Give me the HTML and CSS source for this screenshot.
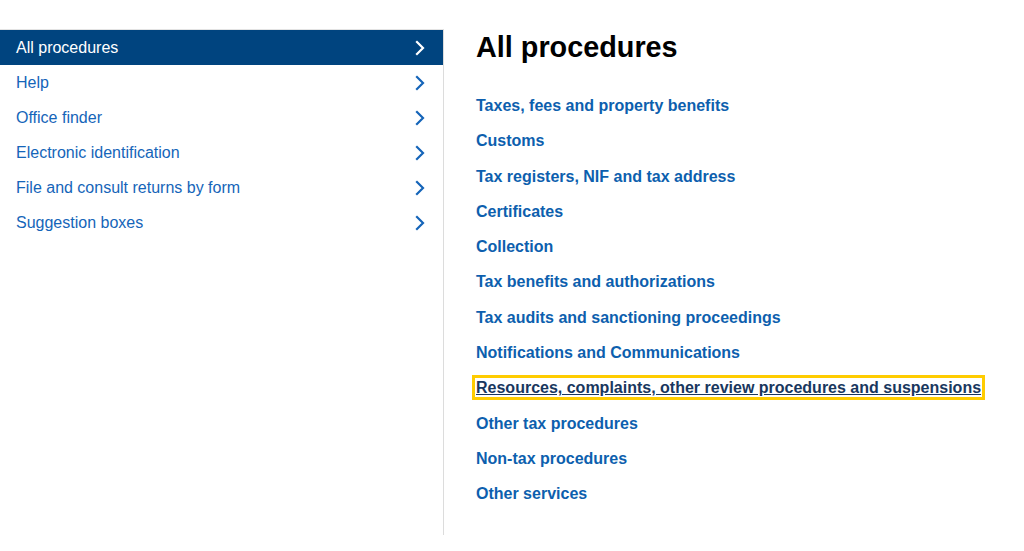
FILE: index.html
```html
<!DOCTYPE html>
<html lang="en">
<head>
<meta charset="utf-8">
<title>All procedures</title>
<link rel="stylesheet" href="styles.css">
</head>
<body>
<div class="page">
  <nav class="sidebar">
    <ul class="side-list">
      <li><a class="side-item active" href="#">All procedures<svg class="chev" viewBox="0 0 10 16"><path d="M2 2 L8 8 L2 14"/></svg></a></li>
      <li><a class="side-item" href="#">Help<svg class="chev" viewBox="0 0 10 16"><path d="M2 2 L8 8 L2 14"/></svg></a></li>
      <li><a class="side-item" href="#">Office finder<svg class="chev" viewBox="0 0 10 16"><path d="M2 2 L8 8 L2 14"/></svg></a></li>
      <li><a class="side-item" href="#">Electronic identification<svg class="chev" viewBox="0 0 10 16"><path d="M2 2 L8 8 L2 14"/></svg></a></li>
      <li><a class="side-item" href="#">File and consult returns by form<svg class="chev" viewBox="0 0 10 16"><path d="M2 2 L8 8 L2 14"/></svg></a></li>
      <li><a class="side-item" href="#">Suggestion boxes<svg class="chev" viewBox="0 0 10 16"><path d="M2 2 L8 8 L2 14"/></svg></a></li>
    </ul>
  </nav>
  <main class="main">
    <h1 class="title">All procedures</h1>
    <ul class="proc-list">
      <li><a href="#">Taxes, fees and property benefits</a></li>
      <li><a href="#">Customs</a></li>
      <li><a href="#">Tax registers, NIF and tax address</a></li>
      <li><a href="#">Certificates</a></li>
      <li><a href="#">Collection</a></li>
      <li><a href="#">Tax benefits and authorizations</a></li>
      <li><a href="#">Tax audits and sanctioning proceedings</a></li>
      <li><a href="#">Notifications and Communications</a></li>
      <li><a class="focused" href="#">Resources, complaints, other review procedures and suspensions</a></li>
      <li><a href="#">Other tax procedures</a></li>
      <li><a href="#">Non-tax procedures</a></li>
      <li><a href="#">Other services</a></li>
    </ul>
  </main>
</div>
</body>
</html>
```

FILE: styles.css
```css
* { box-sizing: border-box; }

html, body {
  margin: 0;
  padding: 0;
  background: #ffffff;
  font-family: "Liberation Sans", Arial, sans-serif;
}

.page {
  display: flex;
  align-items: flex-start;
  padding-top: 29px;
}

.sidebar {
  width: 444px;
  flex: 0 0 444px;
  height: 506px;
  border-top: 1px solid #e3e3e3;
  border-right: 1px solid #dcdcdc;
}

.side-list {
  list-style: none;
  margin: 0;
  padding: 0;
}

.side-item {
  display: flex;
  align-items: center;
  justify-content: space-between;
  height: 35px;
  padding: 1px 18px 0 16px;
  font-size: 16px;
  color: #1565b9;
  text-decoration: none;
}

.side-item.active {
  background: #00447f;
  color: #ffffff;
}

.chev {
  width: 10px;
  height: 16px;
  fill: none;
  stroke: currentColor;
  stroke-width: 2.2;
  stroke-linecap: square;
  stroke-linejoin: miter;
}

.main {
  flex: 1;
  padding: 1px 0 0 32px;
}

.title {
  margin: 0 0 31.5px;
  font-size: 28.8px;
  line-height: 34.5px;
  font-weight: bold;
  color: #000000;
}

.proc-list {
  list-style: none;
  margin: 0;
  padding: 0;
  display: flex;
  flex-direction: column;
  gap: 16.1px;
}

.proc-list li {
  line-height: 19.2px;
}

.proc-list a {
  font-size: 16px;
  font-weight: bold;
  color: #0d5fae;
  text-decoration: none;
}

.proc-list a.focused {
  color: #19375e;
  text-decoration: underline;
  outline: 3px solid #ffcc00;
  outline-offset: 1px;
}
```
